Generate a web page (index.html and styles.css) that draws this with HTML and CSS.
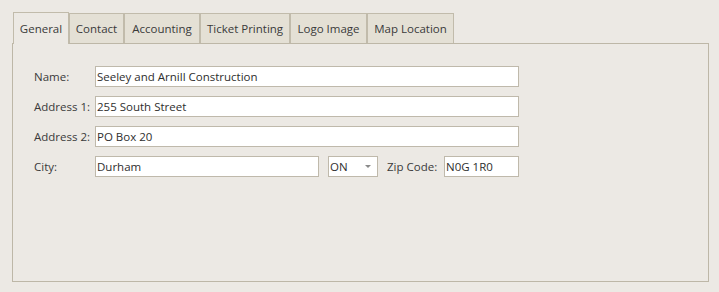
FILE: index.html
```html
<!DOCTYPE html>
<html lang="en">
<head>
    <meta charset="UTF-8">
    <title>Customer Details</title>
    <link rel="stylesheet" href="styles.css">
</head>
<body>

<div class="tab-view">
    <div class="tab-strip">
        <div class="tab tab-general active">General</div>
        <div class="tab tab-contact">Contact</div>
        <div class="tab tab-accounting">Accounting</div>
        <div class="tab tab-ticket">Ticket Printing</div>
        <div class="tab tab-logo">Logo Image</div>
        <div class="tab tab-map">Map Location</div>
    </div>

    <div class="tab-panel">
        <div class="form-row">
            <label>Name:</label>
            <input class="field wide" type="text" value="Seeley and Arnill Construction">
        </div>
        <div class="form-row">
            <label>Address 1:</label>
            <input class="field wide" type="text" value="255 South Street">
        </div>
        <div class="form-row">
            <label>Address 2:</label>
            <input class="field wide" type="text" value="PO Box 20">
        </div>
        <div class="form-row">
            <label>City:</label>
            <input class="field city" type="text" value="Durham">
            <div class="combo">
                <span>ON</span>
                <span class="arrow"></span>
            </div>
            <label class="zip-label">Zip Code:</label>
            <input class="field zip" type="text" value="N0G 1R0">
        </div>
    </div>
</div>

</body>
</html>
```

FILE: styles.css
```css
body {
    margin: 0;
    background-color: #ece9e4;
    font-family: "Open Sans", "Noto Sans", sans-serif;
    font-size: 11.5px;
    color: #3a3a3a;
}

.tab-view {
    padding: 12px 0 0 12px;
    width: 697px;
}

.tab-strip {
    display: flex;
    align-items: flex-end;
    padding-left: 1px;
    position: relative;
    z-index: 1;
}

.tab {
    height: 30px;
    padding-top: 1px;
    line-height: 28px;
    text-align: center;
    background-color: #e4e0d5;
    border: 1px solid #c1bbab;
    border-bottom: none;
    box-sizing: border-box;
}

.tab.active {
    height: 32px;
    line-height: 29px;
    background-color: #ece9e4;
    margin-bottom: -1px;
}

/* tab widths as drawn by the native control */
.tab-general { width: 56px; }
.tab-contact { width: 55px; }
.tab-accounting { width: 76px; }
.tab-ticket { width: 90px; }
.tab-logo { width: 77px; }
.tab-map { width: 87px; }

.tab-panel {
    border: 1px solid #bdb7a7;
    padding: 22px 0 0 21px;
    box-sizing: border-box;
    height: 239px;
}

.form-row {
    display: flex;
    align-items: center;
    height: 21px;
    margin-bottom: 9px;
}

.form-row label {
    width: 61px;
}

.field {
    height: 21px;
    box-sizing: border-box;
    border: 1px solid #bfb9ab;
    background-color: #fff;
    font-family: inherit;
    font-size: 11.5px;
    color: #2e2e2e;
    padding: 0 1px;
    margin: 0;
    outline: none;
}

.field.wide {
    width: 424px;
}

.field.city {
    width: 224px;
}

.combo {
    width: 50px;
    height: 21px;
    box-sizing: border-box;
    border: 1px solid #bfb9ab;
    background-color: #fff;
    margin-left: 9px;
    display: flex;
    align-items: center;
    justify-content: space-between;
    padding: 0 6px 0 1px;
    color: #2e2e2e;
}

.arrow {
    width: 0;
    height: 0;
    border-left: 3px solid transparent;
    border-right: 3px solid transparent;
    border-top: 3px solid #8a8a8a;
}

.form-row .zip-label {
    width: 57px;
    margin-left: 9px;
}

.field.zip {
    width: 75px;
}
```
